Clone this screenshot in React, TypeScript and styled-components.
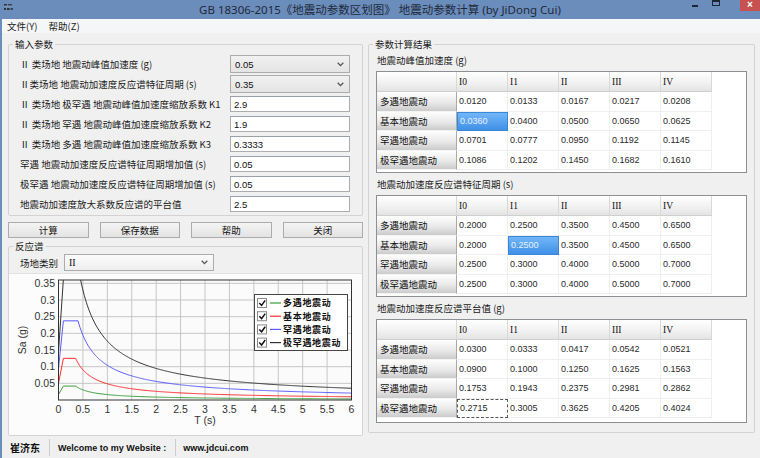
import styled, { createGlobalStyle, css } from "styled-components";

const CJK = `"Noto Sans CJK SC", "Noto Sans", sans-serif`;
const NUM = `"Liberation Sans", Arial, sans-serif`;
const SERIF = `"Liberation Serif", "Times New Roman", serif`;
const BLUE = "#6b8dbc";

const GlobalStyle = createGlobalStyle`
  html, body { margin: 0; padding: 0; }
  body { background: #f0f0f0; font-family: ${CJK}; color: #1a1a1a; }
  * { box-sizing: border-box; }
`;

const Window = styled.div`
  width: 760px;
  height: 458px;
  display: flex;
  flex-direction: column;
  overflow: hidden;
  background: #f0f0f0;
`;

const TitleBar = styled.div`
  height: 19px;
  flex: none;
  background: ${BLUE};
  display: grid;
  grid-template-columns: 1fr auto 1fr;
  align-items: start;
`;

const AppIcon = styled.svg`
  margin: 4px 0 0 4px;
`;

const TitleText = styled.div`
  font-family: "Noto Sans", "Noto Sans CJK SC", sans-serif;
  font-size: 11.5px;
  line-height: 19px;
  color: #1f2a3a;
  white-space: nowrap;
`;

const Controls = styled.div`
  display: flex;
  justify-content: flex-end;
  align-items: flex-start;
`;

const MinBtn = styled.div`
  width: 6px;
  height: 2px;
  margin-top: 5px;
  background: #1d2633;
`;

const MaxBtn = styled.div`
  width: 8px;
  height: 6px;
  margin-left: 14px;
  border: 1px solid #1d2633;
  border-top-width: 2px;
`;

const CloseBtn = styled.div`
  width: 20px;
  height: 11px;
  margin-left: 20px;
  background: #c75050;
  color: #fff;
  font-family: ${NUM};
  font-weight: bold;
  font-size: 10px;
  line-height: 10px;
  text-align: center;
`;

const Body = styled.div`
  flex: 1;
  display: flex;
  flex-direction: column;
  border-left: 2px solid ${BLUE};
  min-height: 0;
`;

const MenuBar = styled.div`
  height: 14px;
  flex: none;
  display: flex;
  gap: 11px;
  padding-left: 5px;
  background: #f5f6f7;
  font-size: 9.5px;
  line-height: 14px;
`;

const Main = styled.div`
  flex: 1;
  display: flex;
  gap: 5px;
  padding: 5px 5px 4px 6px;
  min-height: 0;
`;

const LeftCol = styled.div`
  width: 355px;
  flex: none;
  display: flex;
  flex-direction: column;
`;

const Group = styled.fieldset<{ $grow?: boolean }>`
  margin: 0;
  min-width: 0;
  border: 1px solid #d3d3d3;
  border-radius: 2px;
  padding: 0;
  display: flex;
  flex-direction: column;
  ${({ $grow }) =>
    $grow &&
    css`
      flex: 1;
    `}
`;

const GroupTitle = styled.legend`
  margin-left: 4px;
  padding: 0 2px;
  font-size: 9.5px;
  line-height: 12px;
  color: #1a1a1a;
`;

const ParamList = styled.div`
  padding: 4px 0 1px 11px;
`;

const ParamRow = styled.div`
  display: grid;
  grid-template-columns: 210px 120px;
  align-items: center;
  height: 20px;
`;

const ParamLabel = styled.span`
  font-size: 9.5px;
  white-space: nowrap;
`;

const Combo = styled.div<{ $light?: boolean }>`
  height: 18px;
  display: flex;
  align-items: center;
  justify-content: space-between;
  padding: 0 5px 0 4px;
  border: 1px solid #acacac;
  background: ${({ $light }) =>
    $light ? "linear-gradient(#fbfbfb, #eeeeee)" : "linear-gradient(#f1f1f1, #e4e4e4)"};
  font-family: ${NUM};
  font-size: 9.5px;
  color: #111;
`;

const SerifValue = styled.span`
  font-family: ${SERIF};
  font-size: 10px;
`;

const TextField = styled.input`
  height: 16px;
  width: 100%;
  margin: 0;
  padding: 0 3px;
  border: 1px solid #abadb3;
  border-top-color: #9aa0a8;
  background: #fff;
  font-family: ${NUM};
  font-size: 9.5px;
  color: #111;
  outline: none;
`;

const ButtonRow = styled.div`
  display: grid;
  grid-template-columns: repeat(4, 1fr);
  gap: 11px;
  margin-top: 6px;
  height: 19px;
`;

const Button = styled.button`
  margin: 0;
  padding: 0;
  border: 1px solid #acacac;
  background: linear-gradient(#f4f4f4, #e3e3e3);
  font-family: ${CJK};
  font-size: 9.5px;
  color: #111;
`;

const SpectrumGroup = styled(Group)`
  margin-top: 2px;
`;

const SiteRow = styled.div`
  display: flex;
  align-items: center;
  gap: 6px;
  padding: 2px 0 0 11px;
`;

const SiteCombo = styled(Combo)`
  width: 150px;
  height: 17px;
`;

const ChartPanel = styled.div`
  flex: 1;
  margin-top: 2px;
  background: #fcfcfc;
  border-top: 1px solid #e2e2e2;
`;

const RightGroup = styled(Group)`
  flex: 1;
`;

const Results = styled.div`
  display: flex;
  flex-direction: column;
  gap: 1px;
  padding: 0 7px 0 7px;
`;

const SubTitle = styled.div`
  height: 20px;
  line-height: 20px;
  padding-left: 1px;
  font-size: 9.5px;
`;

const TableBox = styled.div<{ $h: number }>`
  height: ${({ $h }) => $h}px;
  border: 1px solid #8c8f94;
  background: #fff;
  display: grid;
  grid-template-columns: 80px repeat(5, 51px);
  grid-template-rows: 20px repeat(4, 19.5px);
  align-content: start;
`;

const ColHead = styled.div`
  background: linear-gradient(#ffffff, #f3f3f3 50%, #e4e4e4);
  border-right: 1px solid #d8d8d8;
  border-bottom: 1px solid #cfcfcf;
  font-family: ${SERIF};
  font-size: 9.5px;
  display: flex;
  align-items: center;
  padding-left: 2px;
  color: #111;
`;

const RowHead = styled.div`
  background: linear-gradient(#fefefe, #e9e9e9 55%, #cbcbcb);
  border-right: 1px solid #a9a9a9;
  border-bottom: 1px solid #f4f4f4;
  font-size: 9.5px;
  display: flex;
  align-items: center;
  padding-left: 3px;
  color: #111;
`;

const Cell = styled.div<{ $state?: "selected" | "focused" }>`
  border-right: 1px solid #efefef;
  border-bottom: 1px solid #efefef;
  font-family: ${NUM};
  font-size: 9px;
  color: #2a2a2a;
  display: flex;
  align-items: center;
  padding-left: 2px;
  ${({ $state }) =>
    $state === "selected" &&
    css`
      background: linear-gradient(#72b6f8, #3f90e8);
      border: 1px solid #3a86d8;
      color: #e6f2ff;
    `}
  ${({ $state }) =>
    $state === "focused" &&
    css`
      border: 1px dashed #555;
    `}
`;

const StatusBar = styled.div`
  height: 21px;
  flex: none;
  display: flex;
  align-items: stretch;
  padding: 2px 0 2px 8px;
  background: #f0f0f0;
  font-family: ${NUM};
  font-weight: bold;
  font-size: 9px;
  color: #111;
`;

const StatusCell = styled.div<{ $pl: number; $sep?: boolean }>`
  display: flex;
  align-items: center;
  padding: 0 9px 0 ${({ $pl }) => $pl}px;
  border-right: ${({ $sep }) => ($sep ? "1px solid #cdcdcd" : "none")};
  white-space: nowrap;
`;

const StatusCJK = styled.span`
  font-family: ${CJK};
  font-size: 10px;
`;

const Chevron = () => (
  <svg width="7" height="5" viewBox="0 0 7 5">
    <path d="M0.7 0.8 L3.5 3.6 L6.3 0.8" fill="none" stroke="#555" strokeWidth="1.3" />
  </svg>
);

const COLS = ["I0", "I1", "II", "III", "IV"];
const ROWS = ["多遇地震动", "基本地震动", "罕遇地震动", "极罕遇地震动"];

type TableData = {
  title: string;
  values: string[][];
  mark: [number, number, "selected" | "focused"];
  height: number;
};

const TABLES: TableData[] = [
  {
    title: "地震动峰值加速度 (g)",
    values: [
      ["0.0120", "0.0133", "0.0167", "0.0217", "0.0208"],
      ["0.0360", "0.0400", "0.0500", "0.0650", "0.0625"],
      ["0.0701", "0.0777", "0.0950", "0.1192", "0.1145"],
      ["0.1086", "0.1202", "0.1450", "0.1682", "0.1610"],
    ],
    mark: [1, 0, "selected"],
    height: 102,
  },
  {
    title: "地震动加速度反应谱特征周期 (s)",
    values: [
      ["0.2000", "0.2500", "0.3500", "0.4500", "0.6500"],
      ["0.2000", "0.2500", "0.3500", "0.4500", "0.6500"],
      ["0.2500", "0.3000", "0.4000", "0.5000", "0.7000"],
      ["0.2500", "0.3000", "0.4000", "0.5000", "0.7000"],
    ],
    mark: [1, 1, "selected"],
    height: 102,
  },
  {
    title: "地震动加速度反应谱平台值 (g)",
    values: [
      ["0.0300", "0.0333", "0.0417", "0.0542", "0.0521"],
      ["0.0900", "0.1000", "0.1250", "0.1625", "0.1563"],
      ["0.1753", "0.1943", "0.2375", "0.2981", "0.2862"],
      ["0.2715", "0.3005", "0.3625", "0.4205", "0.4024"],
    ],
    mark: [3, 0, "focused"],
    height: 104,
  },
];

const PARAMS: { label: string; value: string; combo?: boolean }[] = [
  { label: "Ⅱ 类场地 地震动峰值加速度 (g)", value: "0.05", combo: true },
  { label: "Ⅱ类场地 地震动加速度反应谱特征周期 (s)", value: "0.35", combo: true },
  { label: "Ⅱ 类场地 极罕遇 地震动峰值加速度缩放系数 K1", value: "2.9" },
  { label: "Ⅱ 类场地 罕遇 地震动峰值加速度缩放系数 K2", value: "1.9" },
  { label: "Ⅱ 类场地 多遇 地震动峰值加速度缩放系数 K3", value: "0.3333" },
  { label: "罕遇 地震动加速度反应谱特征周期增加值 (s)", value: "0.05" },
  { label: "极罕遇 地震动加速度反应谱特征周期增加值 (s)", value: "0.05" },
  { label: "地震动加速度放大系数反应谱的平台值", value: "2.5" },
];

const SERIES = [
  { name: "多遇地震动", color: "#3a9e3a", amax: 0.0167, tg: 0.35 },
  { name: "基本地震动", color: "#ff2e2e", amax: 0.05, tg: 0.35 },
  { name: "罕遇地震动", color: "#5a5aff", amax: 0.095, tg: 0.4 },
  { name: "极罕遇地震动", color: "#333333", amax: 0.145, tg: 0.45 },
];

// plot geometry inside the chart svg
const PL = 49.5;
const PR = 342.5;
const PT = 6;
const PB = 126;
const xOf = (t: number) => PL + (t / 6) * (PR - PL);
const yOf = (v: number) => PB - v * 333.3;

const beta = (t: number, tg: number) =>
  t <= 0.1 ? 1 + 15 * t : t <= tg ? 2.5 : 2.5 * Math.pow(tg / t, 0.9);

const curvePath = (amax: number, tg: number) => {
  const ts = [0, 0.1, tg];
  for (let t = tg + 0.02; t <= 6.0001; t += 0.02) ts.push(t);
  return ts
    .map((t, i) => `${i ? "L" : "M"}${xOf(t).toFixed(2)} ${yOf(amax * beta(t, tg)).toFixed(2)}`)
    .join(" ");
};

const SpectrumChart = () => {
  const xt = Array.from({ length: 13 }, (_, i) => i * 0.5);
  const yt = [0.05, 0.1, 0.15, 0.2, 0.25, 0.3, 0.35];
  return (
    <svg width="353" height="156" viewBox="0 0 353 156" fontFamily={NUM}>
      <defs>
        <clipPath id="plot">
          <rect x={PL} y={PT} width={PR - PL} height={PB - PT} />
        </clipPath>
      </defs>
      <rect x={PL} y={PT} width={PR - PL} height={PB - PT} fill="#fbfbfb" />
      {xt.slice(1, -1).map((t) => (
        <line key={t} x1={xOf(t)} x2={xOf(t)} y1={PT} y2={PB} stroke="#c6c6c6" />
      ))}
      {yt.map((v) => (
        <line key={v} x1={PL} x2={PR} y1={yOf(v)} y2={yOf(v)} stroke="#c6c6c6" />
      ))}
      <g clipPath="url(#plot)">
        {SERIES.map((s) => (
          <path key={s.name} d={curvePath(s.amax, s.tg)} fill="none" stroke={s.color} strokeWidth="1" />
        ))}
      </g>
      <rect x={PL} y={PT} width={PR - PL} height={PB - PT} fill="none" stroke="#333" />
      {yt.map((v) => (
        <text key={v} x={46} y={yOf(v) + 3.8} fontSize="10.5" textAnchor="end" fill="#333">
          {v}
        </text>
      ))}
      {xt.map((t) => (
        <text key={t} x={xOf(t)} y={139} fontSize="10.5" textAnchor="middle" fill="#333">
          {t}
        </text>
      ))}
      <text x={xOf(3)} y={149.5} fontSize="10.5" textAnchor="middle" fill="#333">
        T (s)
      </text>
      <text
        transform="translate(17 66) rotate(-90)"
        fontSize="10.5"
        textAnchor="middle"
        fill="#333"
      >
        Sa (g)
      </text>
      <rect x="245.5" y="20.5" width="93" height="56" fill="#fff" stroke="#444" />
      {SERIES.map((s, i) => {
        const cy = 29 + i * 13.2;
        return (
          <g key={s.name}>
            <rect x="248.5" y={cy - 4.5} width="9" height="9" fill="#fff" stroke="#8a8a8a" />
            <path
              d={`M250.3 ${cy} L252.6 ${cy + 2.4} L256.2 ${cy - 2.6}`}
              fill="none"
              stroke="#111"
              strokeWidth="1.5"
            />
            <line x1="261" x2="272" y1={cy} y2={cy} stroke={s.color} strokeWidth="1.2" />
            <text
              x="274"
              y={cy + 3.3}
              fontSize="9"
              letterSpacing="0.7"
              fontWeight="bold"
              fontFamily={CJK}
              fill="#111"
            >
              {s.name}
            </text>
          </g>
        );
      })}
    </svg>
  );
};

const Row = ({ name, children }: { name: string; children: React.ReactNode }) => (
  <>
    <RowHead>{name}</RowHead>
    {children}
  </>
);

const ResultTable = ({ data }: { data: TableData }) => {
  const [mr, mc, ms] = data.mark;
  return (
    <>
      <SubTitle>{data.title}</SubTitle>
      <TableBox $h={data.height}>
        <ColHead />
        {COLS.map((c) => (
          <ColHead key={c}>{c}</ColHead>
        ))}
        {ROWS.map((r, ri) => (
          <Row key={r} name={r}>
            {data.values[ri].map((v, ci) => (
              <Cell key={ci} $state={ri === mr && ci === mc ? ms : undefined}>
                {v}
              </Cell>
            ))}
          </Row>
        ))}
      </TableBox>
    </>
  );
};

export default function App() {
  return (
    <Window>
      <GlobalStyle />
      <TitleBar>
        <AppIcon width="9" height="7" viewBox="0 0 9 7">
          <rect x="0" y="0" width="3" height="1.5" fill="#2d3440" />
          <rect x="4" y="0" width="4" height="1.5" fill="#3c4450" />
          <rect x="1" y="2" width="6" height="1" fill="#8d98a8" />
          <rect x="0" y="4" width="2" height="2" fill="#2d3440" />
          <rect x="3" y="4" width="2.5" height="2" fill="#2d3440" />
          <rect x="6.5" y="4" width="2.5" height="2" fill="#3c4450" />
        </AppIcon>
        <TitleText>GB 18306-2015《地震动参数区划图》 地震动参数计算 (by JiDong Cui)</TitleText>
        <Controls>
          <MinBtn />
          <MaxBtn />
          <CloseBtn>×</CloseBtn>
        </Controls>
      </TitleBar>
      <Body>
        <MenuBar>
          <span>文件(Y)</span>
          <span>帮助(Z)</span>
        </MenuBar>
        <Main>
          <LeftCol>
            <Group>
              <GroupTitle>输入参数</GroupTitle>
              <ParamList>
                {PARAMS.map((p) => (
                  <ParamRow key={p.label}>
                    <ParamLabel>{p.label}</ParamLabel>
                    {p.combo ? (
                      <Combo>
                        <span>{p.value}</span>
                        <Chevron />
                      </Combo>
                    ) : (
                      <TextField value={p.value} readOnly />
                    )}
                  </ParamRow>
                ))}
              </ParamList>
            </Group>
            <ButtonRow>
              <Button>计算</Button>
              <Button>保存数据</Button>
              <Button>帮助</Button>
              <Button>关闭</Button>
            </ButtonRow>
            <SpectrumGroup $grow>
              <GroupTitle>反应谱</GroupTitle>
              <SiteRow>
                <ParamLabel>场地类别</ParamLabel>
                <SiteCombo $light>
                  <SerifValue>II</SerifValue>
                  <Chevron />
                </SiteCombo>
              </SiteRow>
              <ChartPanel>
                <SpectrumChart />
              </ChartPanel>
            </SpectrumGroup>
          </LeftCol>
          <RightGroup>
            <GroupTitle>参数计算结果</GroupTitle>
            <Results>
              {TABLES.map((t) => (
                <ResultTable key={t.title} data={t} />
              ))}
            </Results>
          </RightGroup>
        </Main>
        <StatusBar>
          <StatusCell $pl={0} $sep>
            <StatusCJK>崔济东</StatusCJK>
          </StatusCell>
          <StatusCell $pl={8} $sep>
            Welcome to my Website :
          </StatusCell>
          <StatusCell $pl={7}>www.jdcui.com</StatusCell>
        </StatusBar>
      </Body>
    </Window>
  );
}
